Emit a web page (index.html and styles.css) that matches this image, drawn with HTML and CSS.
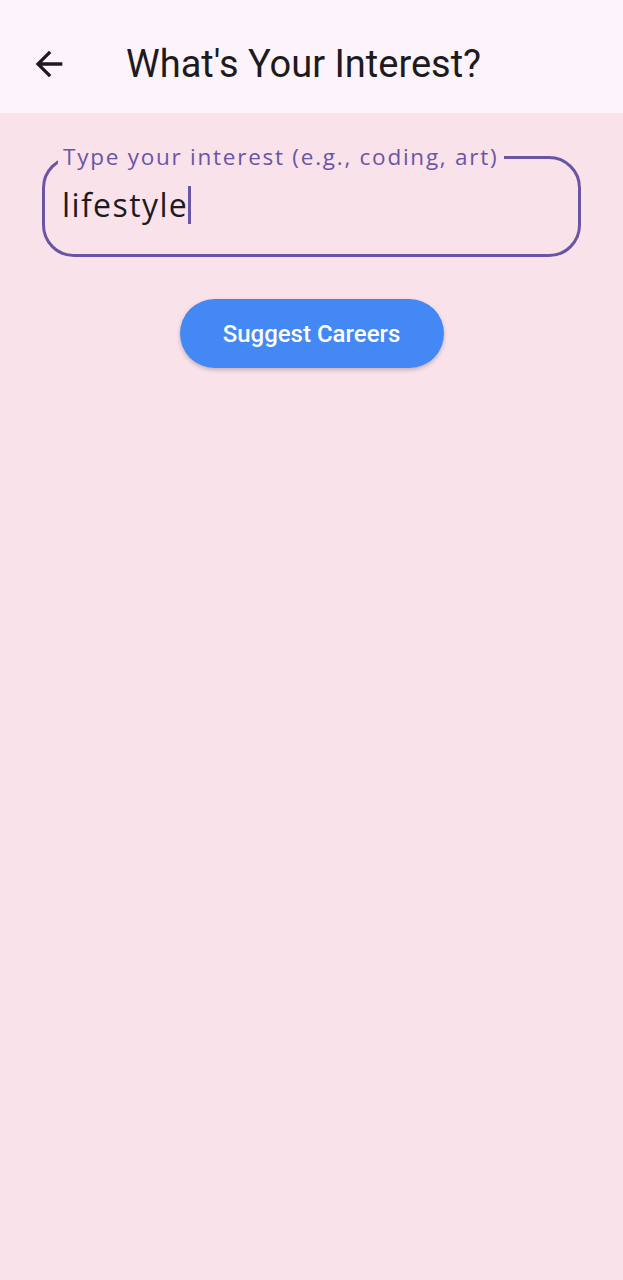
FILE: index.html
```html
<!DOCTYPE html>
<html>
<head>
<meta charset="utf-8">
<link rel="stylesheet" href="styles.css">
</head>
<body>
<header class="appbar">
  <button class="back" aria-label="Back">
    <svg width="40" height="40" viewBox="0 0 24 24"><path d="M20 11H7.83l5.59-5.59L12 4l-8 8 8 8 1.41-1.41L7.83 13H20v-2z" fill="#1d1b20"/></svg>
  </button>
  <h1 class="title">What's Your Interest?</h1>
</header>
<main class="content">
  <fieldset class="field">
    <legend class="label">Type your interest (e.g., coding, art)</legend>
    <div class="value">lifestyle<span class="caret"></span></div>
  </fieldset>
  <div class="actions">
    <button class="primary">Suggest Careers</button>
  </div>
</main>
</body>
</html>
```
FILE: styles.css
```css
html, body {
  margin: 0;
  padding: 0;
  background: #f9e2ea;
  min-height: 1280px;
}
body {
  font-family: Roboto, "Noto Sans", sans-serif;
}
.appbar {
  height: 113px;
  background: #fdf4fb;
  display: flex;
  align-items: center;
  padding: 14px 0 0 29px;
  box-sizing: border-box;
}
.back {
  background: none;
  border: 0;
  padding: 0;
  width: 40px;
  height: 40px;
  display: flex;
}
.title {
  margin: 0 0 0 57px;
  font-weight: 400;
  font-size: 38px;
  color: #1d1b20;
  letter-spacing: 0;
}
.content {
  padding: 0 42px;
}
.field {
  margin: 30px 0 0;
  border: 3px solid #6a55a4;
  border-radius: 32px;
  padding: 0 12px 0 17px;
  height: 114px;
  box-sizing: border-box;
}
.label {
  font-family: "Open Sans", sans-serif;
  font-size: 22.5px;
  letter-spacing: 1.75px;
  color: #6b55a5;
  padding: 0 6px 0 5px;
  line-height: 28px;
  margin-left: -4px;
}
.value {
  font-family: "Open Sans", sans-serif;
  font-size: 32px;
  letter-spacing: 1.4px;
  color: #1d1b20;
  line-height: 40px;
  margin-top: 14px;
  display: flex;
  align-items: center;
}
.caret {
  display: inline-block;
  width: 3px;
  height: 38px;
  background: #6a55a4;
  margin-left: 0;
}
.actions {
  display: flex;
  justify-content: center;
  margin-top: 42px;
}
.primary {
  width: 264px;
  height: 69px;
  border: 0;
  border-radius: 35px;
  background: #4388f5;
  color: #fff;
  font-family: Roboto, sans-serif;
  font-weight: 500;
  font-size: 24px;
  box-shadow: 0 2px 4px rgba(0,0,0,0.22);
}
```
